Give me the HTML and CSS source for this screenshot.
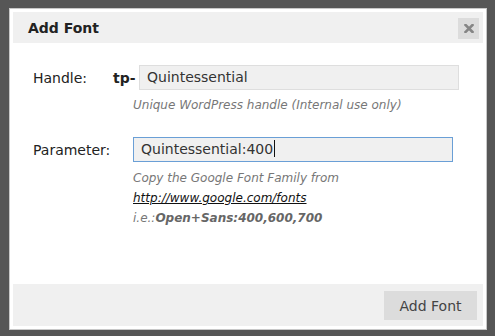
FILE: index.html
```html
<!DOCTYPE html>
<html lang="en">
<head>
  <meta charset="UTF-8">
  <title>Add Font</title>
  <link rel="stylesheet" href="styles.css">
</head>
<body>

  <div class="dialog">
    <div class="dialog-header">
      <span class="dialog-title">Add Font</span>
      <button class="close-btn" title="Close">
        <svg width="10" height="9" viewBox="0 0 10 9">
          <path d="M1.5 1 L8.5 8 M8.5 1 L1.5 8" stroke="#858585" stroke-width="2.6" stroke-linecap="square"/>
        </svg>
      </button>
    </div>

    <div class="dialog-body">
      <div class="form-row">
        <label class="form-label form-label-short">Handle:</label>
        <span class="prefix">tp-</span>
        <div class="field">Quintessential</div>
      </div>
      <div class="help help-handle">Unique WordPress handle (Internal use only)</div>

      <div class="form-row form-row-param">
        <label class="form-label">Parameter:</label>
        <div class="field field-focus">Quintessential:400<span class="caret"></span></div>
      </div>
      <div class="help help-param">
        <div>Copy the Google Font Family from</div>
        <div><a href="#">http://www.google.com/fonts</a></div>
        <div>i.e.:<b>Open+Sans:400,600,700</b></div>
      </div>
    </div>

    <div class="dialog-footer">
      <button class="btn">Add Font</button>
    </div>
  </div>

</body>
</html>
```

FILE: styles.css
```css
body {
  margin: 0;
  background-color: #565656;
  font-family: "DejaVu Sans", Verdana, sans-serif;
  font-size: 14px;
  color: #222;
}
.dialog {
  margin: 8px 0 0 9px;
  width: 470px;
  height: 314px;
  padding: 3px;
  background-color: #fff;
  border: 1px solid #c8c8c8;
  display: flex;
  flex-direction: column;
}
.dialog-header {
  height: 31px;
  background-color: #f0f0f0;
  display: flex;
  align-items: center;
  justify-content: space-between;
  padding: 0 4px 0 15px;
}
.dialog-title {
  font-weight: bold;
  font-size: 14px;
  color: #222;
}
.close-btn {
  width: 21px;
  height: 21px;
  border: none;
  padding: 0;
  margin-top: 1px;
  background-color: #dcdcdc;
  display: flex;
  align-items: center;
  justify-content: center;
}
.dialog-body {
  flex: 1;
  padding: 22px 20px 0 20px;
}
.form-row {
  display: flex;
  align-items: center;
  height: 25px;
}
.form-row-param {
  margin-top: 23px;
}
.form-label {
  width: 100px;
  flex-shrink: 0;
  color: #222;
}
.form-label-short {
  width: 80px;
}
.prefix {
  font-weight: bold;
  width: 26px;
  flex-shrink: 0;
}
.field {
  width: 311px;
  height: 23px;
  line-height: 23px;
  padding-left: 7px;
  background-color: #f0f0f0;
  border: 1px solid #dedede;
  color: #333;
}
.field-focus {
  border-color: #6a9fd6;
}
.caret {
  display: inline-block;
  width: 1px;
  height: 17px;
  background-color: #111;
  vertical-align: -3px;
  margin-left: 1px;
}
.help {
  margin-left: 100px;
  font-size: 12px;
  font-style: italic;
  color: #777;
}
.help-handle {
  margin-top: 6px;
  line-height: 18px;
}
.help-param {
  margin-top: 6px;
  line-height: 20px;
}
.help a {
  color: #111;
}
.help b {
  color: #666;
}
.dialog-footer {
  height: 42px;
  background-color: #f0f0f0;
  display: flex;
  align-items: center;
  justify-content: flex-end;
  padding-right: 6px;
}
.btn {
  width: 93px;
  height: 29px;
  margin-top: 1px;
  border: none;
  background-color: #dcdcdc;
  font-family: "DejaVu Sans", Verdana, sans-serif;
  font-size: 14px;
  color: #444;
}
```
